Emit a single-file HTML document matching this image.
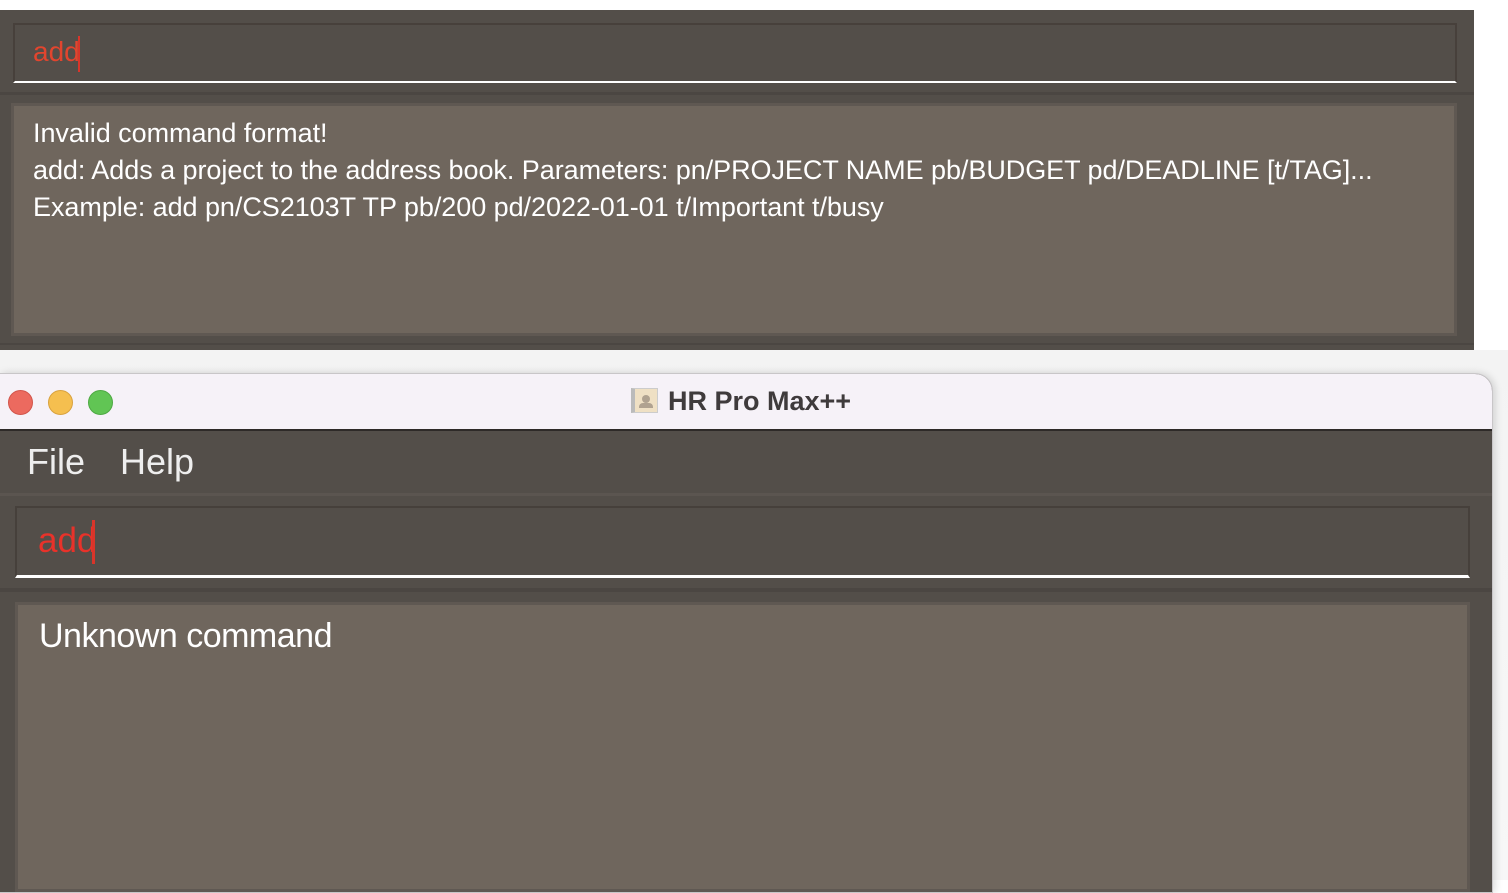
<!DOCTYPE html>
<html><head><style>
body{margin:0;width:1508px;height:880px;background:#fff;position:relative;overflow:hidden;font-family:"Liberation Sans",sans-serif}
div{position:absolute;box-sizing:border-box}
.dark{background:#534e49}
</style></head><body>
<div class="dark" style="left:0;top:10px;width:1474px;height:340px"></div>
<div style="left:13px;top:23px;width:1444px;height:60px;border:2px solid #47403b;border-bottom:2px solid #fff;background:#534e49"></div>
<div style="left:33px;top:36px;color:#e2452e;font-size:28px">add</div>
<div style="left:78px;top:36px;width:2px;height:36px;background:#d8352a"></div>
<div style="left:0;top:92px;width:1474px;height:3px;background:#4b4642"></div>
<div style="left:11px;top:103px;width:1446px;height:233px;background:#6f665d;border:3px solid #5f5852"></div>
<div style="left:33px;top:115px;color:#fff;font-size:27px;line-height:37px;letter-spacing:-0.05px;white-space:nowrap">Invalid command format!<br>add: Adds a project to the address book. Parameters: pn/PROJECT NAME pb/BUDGET pd/DEADLINE [t/TAG]...<br>Example: add pn/CS2103T TP pb/200 pd/2022-01-01 t/Important t/busy</div>
<div style="left:0;top:343px;width:1474px;height:2px;background:#4b4642"></div>
<div style="left:0;top:350px;width:1508px;height:530px;background:linear-gradient(#f3f3f3,#f7f7f7)"></div>
<div style="left:0;top:373px;width:1493px;height:520px;border-radius:0 18px 0 0;background:#534e49;border:1px solid #c8c6c8;border-left:none;box-shadow:2px 0 8px rgba(0,0,0,.15);overflow:hidden">
 <div style="left:0;top:0;width:1493px;height:57px;background:#f6f2f8;border-bottom:2px solid #2e2a28"></div>
</div>
<div style="left:8px;top:390px;width:25px;height:25px;border-radius:50%;background:#ec6a5f;border:1px solid #d2554b"></div>
<div style="left:48px;top:390px;width:25px;height:25px;border-radius:50%;background:#f5bf4f;border:1px solid #d9a23e"></div>
<div style="left:88px;top:390px;width:25px;height:25px;border-radius:50%;background:#61c554;border:1px solid #4ea943"></div>
<div style="left:631px;top:388px;width:27px;height:25px;background:#efe0c4;border:1px solid #ccc;border-left:4px solid #bbb"><div style="left:7px;top:6px;width:8px;height:8px;border-radius:50%;background:#b0a290"></div><div style="left:4px;top:14px;width:14px;height:5px;background:#b0a290;border-radius:4px 4px 0 0"></div></div>
<div style="left:668px;top:386px;color:#3f3b3c;font-size:27px;font-weight:bold">HR Pro Max++</div>
<div style="left:27px;top:441px;color:#eee;font-size:36px">File</div>
<div style="left:120px;top:441px;color:#eee;font-size:36px">Help</div>
<div style="left:0;top:493px;width:1492px;height:3px;background:#5b5550"></div>
<div style="left:15px;top:506px;width:1455px;height:72px;border:2px solid #46403b;border-bottom:3px solid #fff;background:#534e49"></div>
<div style="left:38px;top:521px;color:#e8322a;font-size:35px">add</div>
<div style="left:92px;top:520px;width:3px;height:44px;background:#d8352a"></div>
<div style="left:0;top:588px;width:1492px;height:4px;background:#4b4642"></div>
<div style="left:15px;top:602px;width:1455px;height:290px;background:#6f665d;border:3px solid #5f5852"></div>
<div style="left:39px;top:617px;color:#fff;font-size:34px;letter-spacing:-0.5px">Unknown command</div>
</body></html>
